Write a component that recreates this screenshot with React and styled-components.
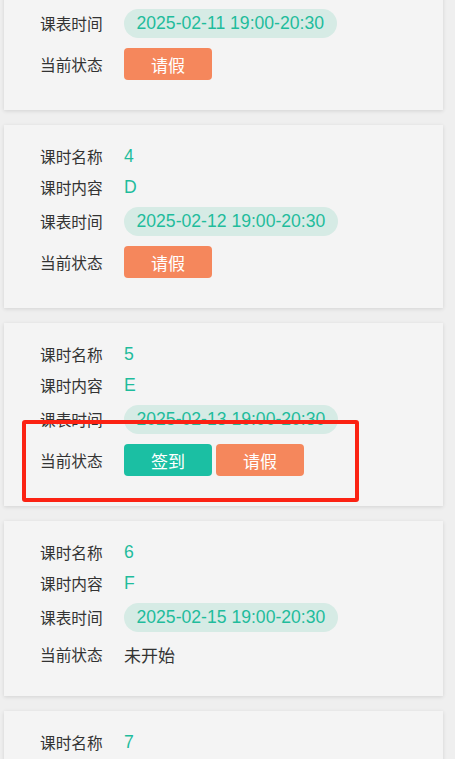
import React from "react";
import styled, { createGlobalStyle } from "styled-components";

const Global = createGlobalStyle`
  html, body { margin: 0; padding: 0; background: #efefef; overflow: hidden; }
  body { font-family: "Liberation Sans", "Noto Sans CJK SC", sans-serif; }
`;

const List = styled.div`
  display: flex;
  flex-direction: column;
  gap: 15px;
  padding: 0 12px 20px 4px;
  margin-top: -73px;
`;

const Card = styled.div`
  position: relative;
  background: #f4f4f4;
  box-shadow: 0 1px 4px rgba(0, 0, 0, 0.12);
  padding: 16px 0 30px 36px;
  display: flex;
  flex-direction: column;
`;

const Row = styled.div`
  display: flex;
  align-items: center;
  height: ${(p) => p.$h}px;
  margin-top: ${(p) => p.$mt || 0}px;
`;

const Label = styled.span`
  width: 84px;
  flex: none;
  font-family: "Noto Sans CJK SC", sans-serif;
  font-size: 15.7px;
  color: #333;
`;

const Value = styled.span`
  font-family: "Liberation Sans", "Noto Sans CJK SC", sans-serif;
  font-size: 17.6px;
  color: #1fbc9c;
`;

const Pill = styled.span`
  display: inline-flex;
  align-items: center;
  height: 29px;
  padding: 0 12.5px;
  border-radius: 15px;
  background: #d6ebe5;
  color: #1fbc9c;
  font-family: "Liberation Sans", sans-serif;
  font-size: 17.6px;
`;

const Buttons = styled.div`
  display: flex;
  gap: 4px;
`;

const Btn = styled.button`
  width: 88px;
  height: 32px;
  border: none;
  border-radius: 4px;
  background: ${(p) => (p.$kind === "sign" ? "#1bbfa3" : "#f5875c")};
  color: #fff;
  font-family: "Noto Sans CJK SC", sans-serif;
  font-size: 17px;
  padding: 0;
`;

const StatusText = styled.span`
  font-family: "Noto Sans CJK SC", sans-serif;
  font-size: 17px;
  color: #333;
`;

const Highlight = styled.div`
  position: absolute;
  left: 18px;
  top: 97px;
  width: 337px;
  height: 82px;
  box-sizing: border-box;
  border: 4px solid #fb2213;
  border-radius: 3px;
  pointer-events: none;
`;

const lessons = [
  { name: "3", content: "C", time: "2025-02-11 19:00-20:30", status: ["leave"] },
  { name: "4", content: "D", time: "2025-02-12 19:00-20:30", status: ["leave"] },
  { name: "5", content: "E", time: "2025-02-13 19:00-20:30", status: ["sign", "leave"], mark: true },
  { name: "6", content: "F", time: "2025-02-15 19:00-20:30", status: "未开始" },
  { name: "7", content: "G", time: "2025-02-16 19:00-20:30", status: "未开始" },
];

export default function App() {
  return (
    <>
      <Global />
      <List>
        {lessons.map((l) => {
          const isBtn = Array.isArray(l.status);
          return (
            <Card key={l.name}>
              <Row $h={31}>
                <Label>课时名称</Label>
                <Value>{l.name}</Value>
              </Row>
              <Row $h={31}>
                <Label>课时内容</Label>
                <Value>{l.content}</Value>
              </Row>
              <Row $h={36}>
                <Label>课表时间</Label>
                <Pill>{l.time}</Pill>
              </Row>
              <Row $h={isBtn ? 32 : 24} $mt={7}>
                <Label>当前状态</Label>
                {isBtn ? (
                  <Buttons>
                    {l.status.map((s) => (
                      <Btn key={s} $kind={s}>
                        {s === "sign" ? "签到" : "请假"}
                      </Btn>
                    ))}
                  </Buttons>
                ) : (
                  <StatusText>{l.status}</StatusText>
                )}
              </Row>
              {l.mark && <Highlight />}
            </Card>
          );
        })}
      </List>
    </>
  );
}
